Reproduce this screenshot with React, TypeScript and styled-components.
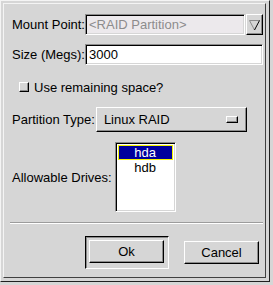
import styled, { createGlobalStyle } from 'styled-components';

const GlobalStyle = createGlobalStyle`
  html, body {
    margin: 0;
    padding: 0;
    background: #d6d6d6;
  }
  body {
    font-family: 'Liberation Sans', Arial, sans-serif;
    font-size: 13px;
    color: #000;
  }
`;

const raised = `
  border-style: solid;
  border-width: 1px;
  border-color: #ffffff #000000 #000000 #ffffff;
  box-shadow: inset -1px -1px 0 #8c8c8c;
`;

const sunken = `
  border-style: solid;
  border-width: 1px;
  border-color: #8c8c8c #ffffff #ffffff #8c8c8c;
  box-shadow: inset 1px 1px 0 #000000, inset -1px -1px 0 #d6d6d6;
`;

const Outer = styled.div`
  box-sizing: border-box;
  width: 270px;
  height: 282px;
  border-style: solid;
  border-width: 1px;
  border-color: #f4f4f4 #202020 #202020 #f4f4f4;
  padding: 2px 3px 3px 2px;
  display: flex;
`;

const Dialog = styled.div`
  box-sizing: border-box;
  flex: 1;
  border-style: solid;
  border-width: 1px;
  border-color: #f4f4f4 #404040 #404040 #f4f4f4;
  display: flex;
  flex-direction: column;
`;

const Form = styled.div`
  padding: 10px 2px 0 8px;
  display: flex;
  flex-direction: column;
`;

const FieldGrid = styled.div`
  display: grid;
  grid-template-columns: auto 1fr;
  column-gap: 0;
  row-gap: 9px;
  align-items: center;
`;

const Label = styled.span`
  white-space: nowrap;
  line-height: 15px;
`;

const Combo = styled.div`
  display: flex;
  height: 21px;
`;

const Entry = styled.div<{ disabled?: boolean }>`
  ${sunken}
  box-sizing: border-box;
  flex: 1;
  height: 21px;
  padding: 0 3px;
  display: flex;
  align-items: center;
  background: ${({ disabled }) => (disabled ? '#ece9ec' : '#ffffff')};
  color: ${({ disabled }) => (disabled ? '#8c8c8c' : '#000000')};
  white-space: nowrap;
  overflow: hidden;
`;

const ArrowButton = styled.div`
  ${raised}
  box-sizing: border-box;
  width: 17px;
  height: 21px;
  margin-left: 1px;
  background: #d6d6d6;
  display: flex;
  align-items: center;
  justify-content: center;
`;

const CheckRow = styled.div`
  display: flex;
  align-items: center;
  gap: 5px;
  margin: 15px 0 0 7px;
  height: 14px;
`;

const CheckBox = styled.div`
  ${raised}
  box-sizing: border-box;
  width: 10px;
  height: 10px;
  background: #d6d6d6;
`;

const Row = styled.div<{ $top: number; $gap: number }>`
  display: flex;
  align-items: center;
  gap: ${({ $gap }) => $gap}px;
  margin-top: ${({ $top }) => $top}px;
`;

const OptionMenu = styled.div`
  ${raised}
  box-sizing: border-box;
  width: 151px;
  height: 25px;
  padding: 0 7px;
  display: flex;
  align-items: center;
  justify-content: space-between;
  background: #d6d6d6;
`;

const Indicator = styled.div`
  ${raised}
  box-sizing: border-box;
  width: 12px;
  height: 7px;
  margin-right: 1px;
`;

const List = styled.div`
  ${sunken}
  box-sizing: border-box;
  width: 61px;
  height: 70px;
  background: #ffffff;
  padding: 2px;
`;

const ListItem = styled.div<{ selected?: boolean }>`
  height: 15px;
  line-height: 13px;
  box-sizing: border-box;
  text-align: center;
  background: ${({ selected }) => (selected ? '#00009c' : 'transparent')};
  color: ${({ selected }) => (selected ? '#ffffff' : '#000000')};
  border: 1px solid ${({ selected }) => (selected ? '#f4f400' : 'transparent')};
`;

const Separator = styled.div`
  margin: 10px 2px 0 6px;
  height: 1px;
  background: #9c9c9c;
  border-bottom: 1px solid #ffffff;
`;

const ButtonBar = styled.div`
  display: flex;
  align-items: center;
  justify-content: flex-end;
  gap: 15px;
  padding: 12px 6px 0 0;
`;

const DefaultFrame = styled.div`
  box-sizing: border-box;
  width: 84px;
  height: 33px;
  border-style: solid;
  border-width: 1px;
  border-color: #000000 #ffffff #ffffff #000000;
  box-shadow: inset 1px 1px 0 #8c8c8c;
  padding: 3px 4px 3px 3px;
  display: flex;
`;

const Button = styled.div`
  ${raised}
  box-sizing: border-box;
  width: 75px;
  height: 23px;
  display: flex;
  align-items: center;
  justify-content: center;
  background: #d6d6d6;
`;

const DownArrow = () => (
  <svg width="11" height="12" viewBox="0 0 11 12">
    <path d="M0.5 1.5 H10.5" stroke="#8c8c8c" />
    <path d="M0.5 1.5 L5.5 11" stroke="#8c8c8c" />
    <path d="M10.5 1.5 L5.5 11" stroke="#000000" />
  </svg>
);

const App = () => (
  <>
    <GlobalStyle />
    <Outer>
      <Dialog>
        <Form>
          <FieldGrid>
            <Label>Mount Point:</Label>
            <Combo>
              <Entry disabled>&lt;RAID Partition&gt;</Entry>
              <ArrowButton>
                <DownArrow />
              </ArrowButton>
            </Combo>
            <Label>Size (Megs):</Label>
            <Entry>3000</Entry>
          </FieldGrid>
          <CheckRow>
            <CheckBox />
            <Label>Use remaining space?</Label>
          </CheckRow>
          <Row $top={13} $gap={1}>
            <Label>Partition Type:</Label>
            <OptionMenu>
              <span>Linux RAID</span>
              <Indicator />
            </OptionMenu>
          </Row>
          <Row $top={10} $gap={3}>
            <Label>Allowable Drives:</Label>
            <List>
              <ListItem selected>hda</ListItem>
              <ListItem>hdb</ListItem>
            </List>
          </Row>
        </Form>
        <Separator />
        <ButtonBar>
          <DefaultFrame>
            <Button>Ok</Button>
          </DefaultFrame>
          <Button>Cancel</Button>
        </ButtonBar>
      </Dialog>
    </Outer>
  </>
);

export default App;
